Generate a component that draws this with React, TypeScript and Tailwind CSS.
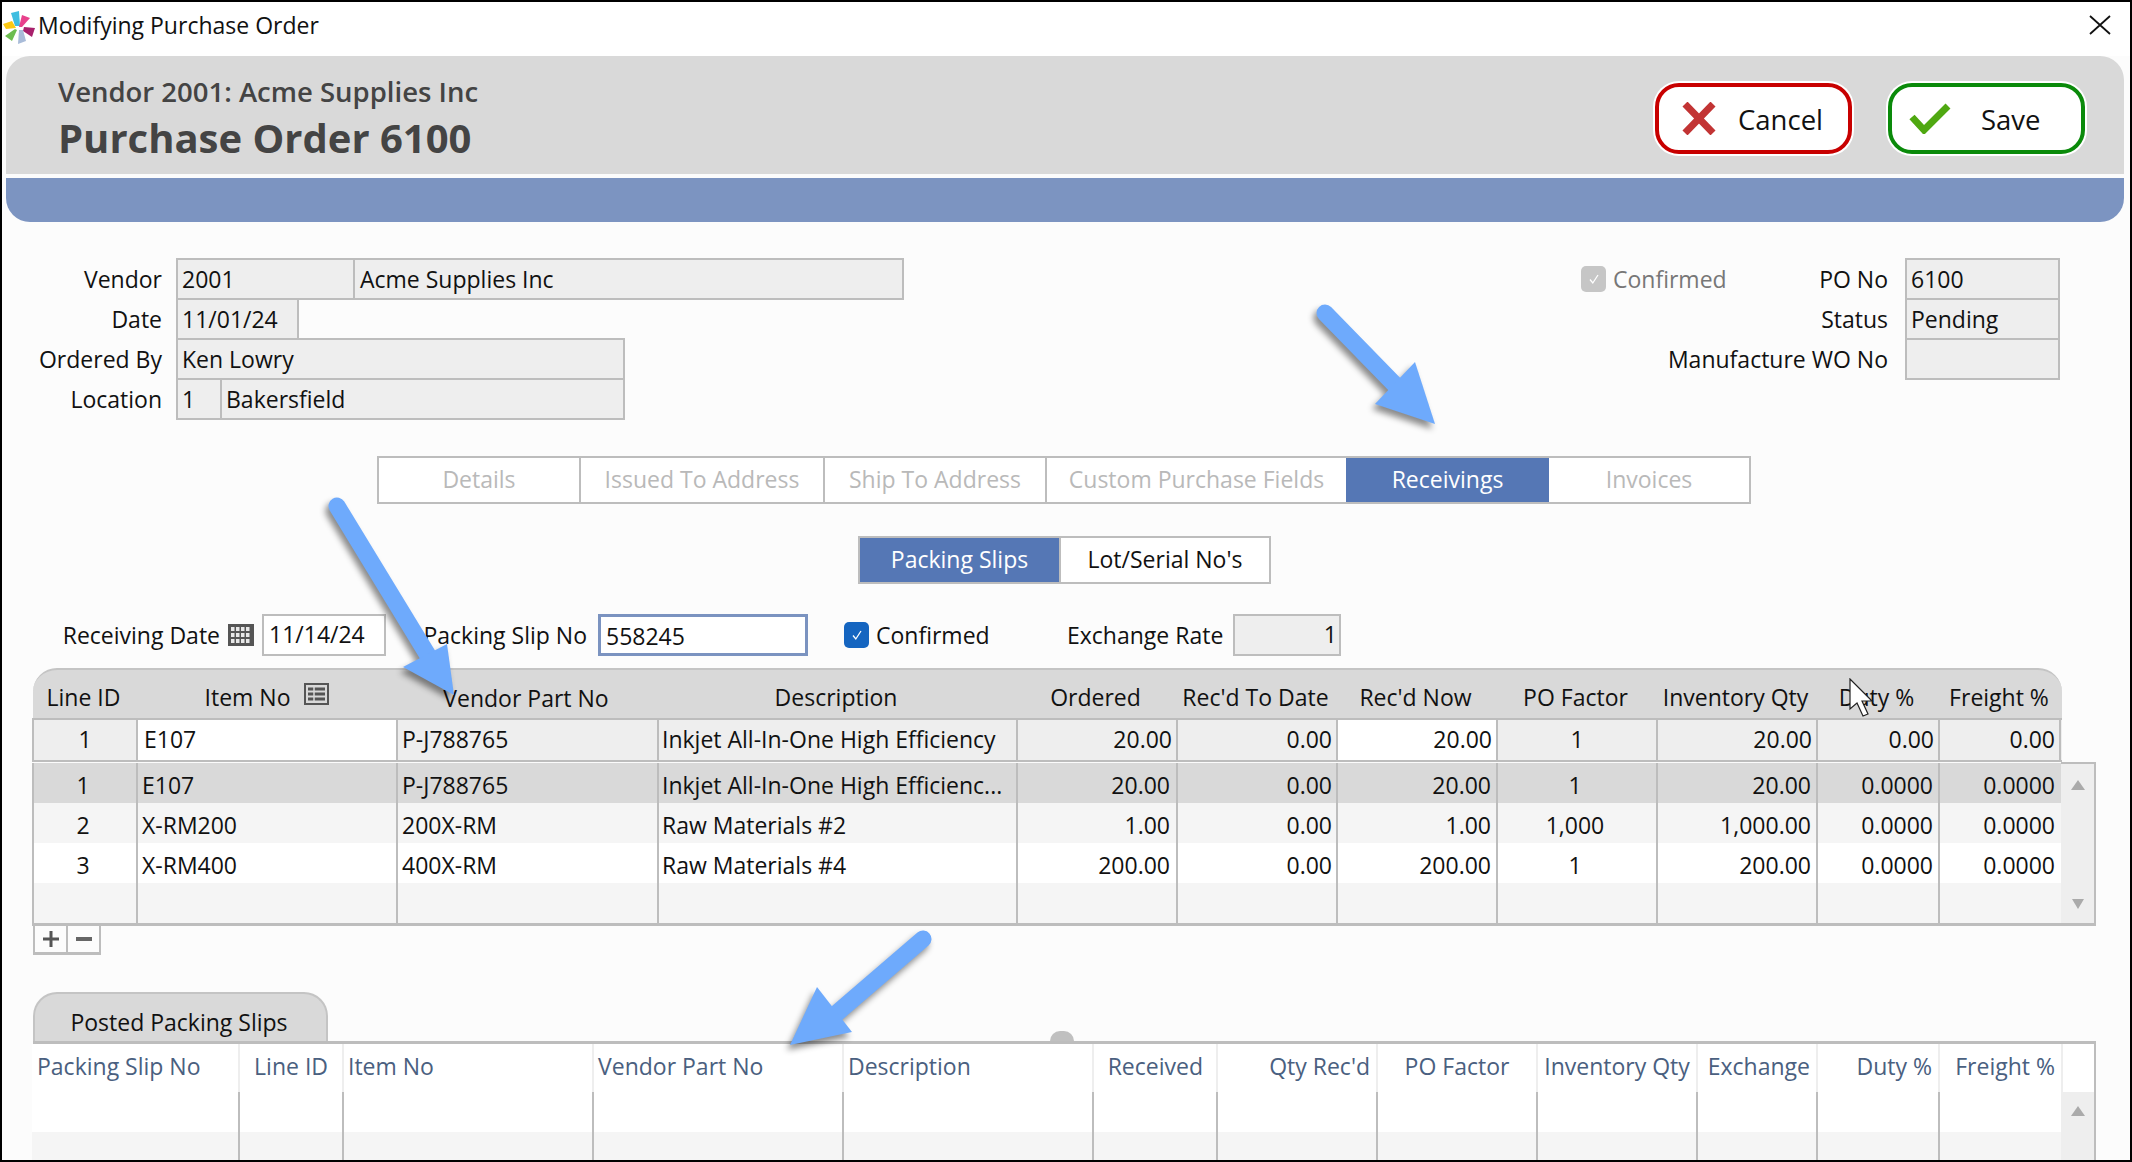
import { Fragment } from "react";

const lineCols = "grid grid-cols-[104px_260px_261px_359px_160px_160px_160px_160px_160px_122px_123px]";
const postedCols = "grid grid-cols-[206px_104px_250px_250px_250px_124px_160px_160px_160px_120px_122px_123px]";

const lineHeaders = ["Line ID", "Item No", "Vendor Part No", "Description", "Ordered", "Rec'd To Date", "Rec'd Now", "PO Factor", "Inventory Qty", "Duty %", "Freight %"];

const lineRows = [
  { id: "1", item: "E107", part: "P-J788765", desc: "Inkjet All-In-One High Efficienc...", ordered: "20.00", toDate: "0.00", now: "20.00", factor: "1", qty: "20.00", duty: "0.0000", freight: "0.0000", bg: "bg-[#d9d9d9]" },
  { id: "2", item: "X-RM200", part: "200X-RM", desc: "Raw Materials #2", ordered: "1.00", toDate: "0.00", now: "1.00", factor: "1,000", qty: "1,000.00", duty: "0.0000", freight: "0.0000", bg: "bg-[#f5f5f5]" },
  { id: "3", item: "X-RM400", part: "400X-RM", desc: "Raw Materials #4", ordered: "200.00", toDate: "0.00", now: "200.00", factor: "1", qty: "200.00", duty: "0.0000", freight: "0.0000", bg: "bg-white" },
  { id: "", item: "", part: "", desc: "", ordered: "", toDate: "", now: "", factor: "", qty: "", duty: "", freight: "", bg: "bg-[#f5f5f5]" },
];

const posted = [
  { label: "Packing Slip No", align: "pl-[5px] text-left" },
  { label: "Line ID", align: "pr-[14px] text-right" },
  { label: "Item No", align: "pl-[4px] text-left" },
  { label: "Vendor Part No", align: "pl-[4px] text-left" },
  { label: "Description", align: "pl-[4px] text-left" },
  { label: "Received", align: "pr-[13px] text-right" },
  { label: "Qty Rec'd", align: "pr-[6px] text-right" },
  { label: "PO Factor", align: "text-center" },
  { label: "Inventory Qty", align: "text-center" },
  { label: "Exchange", align: "pr-[6px] text-right" },
  { label: "Duty %", align: "pr-[6px] text-right" },
  { label: "Freight %", align: "pr-[6px] text-right" },
];

function Logo() {
  return (
    <svg width="36" height="42" viewBox="0 0 36 42" className="-ml-[2px] shrink-0">
      <polygon points="11,9 19,7 20,22 15,22" fill="#3fbde0" />
      <polygon points="22,11 30,14 22,23 19,23" fill="#e8418c" />
      <polygon points="24,23 35,24 32,33 23,27" fill="#a8206c" />
      <polygon points="19,26 23,26 26,37 18,40" fill="#a9bcd9" />
      <polygon points="17,26 12,37 5,32 15,25" fill="#6cbd4f" />
      <polygon points="3,20 12,17 16,24 6,25" fill="#fbc913" />
    </svg>
  );
}

function Field({ className, children }: { className: string; children?: React.ReactNode }) {
  return (
    <div className={`h-[42px] shrink-0 border-2 border-[#bdbdbd] bg-[#eeeeee] px-[4px] leading-[38px] whitespace-nowrap ${className}`}>
      {children}
    </div>
  );
}

function FormRow({ label, children }: { label: string; children: React.ReactNode }) {
  return (
    <div className="-mt-[2px] flex first:mt-0">
      <div className="w-[174px] shrink-0 pr-[14px] text-right leading-[42px]">{label}</div>
      {children}
    </div>
  );
}

function GridIcon() {
  return (
    <svg width="26" height="22" viewBox="0 0 26 22" className="shrink-0">
      <rect width="26" height="22" fill="#555" />
      {[3, 9, 15].map((y) =>
        [3, 8, 13, 18].map((x) => <rect key={`${x}-${y}`} x={x} y={y} width="3.5" height="4" fill="#e8e8e8" />)
      )}
    </svg>
  );
}

function ListIcon() {
  return (
    <svg width="25" height="22" viewBox="0 0 25 22" fill="none" stroke="#555" className="shrink-0">
      <rect x="1" y="1" width="23" height="20" strokeWidth="2" />
      <path d="M4 6h17M4 11h17M4 16h17" strokeWidth="3" />
      <path d="M10 4v15" stroke="#d9d9d9" strokeWidth="1.5" />
    </svg>
  );
}

function Check({ bg, stroke }: { bg: string; stroke: string }) {
  return (
    <span className={`flex h-[26px] w-[25px] shrink-0 items-center justify-center rounded-[5px] ${bg}`}>
      <svg width="14" height="14" viewBox="0 0 14 14" fill="none" stroke={stroke} strokeWidth="1.3">
        <path d="M3 7.5l2.8 3.5L11 3" />
      </svg>
    </span>
  );
}

function Arrows() {
  return (
    <svg width="2132" height="1162" viewBox="0 0 2132 1162" className="pointer-events-none absolute top-0 left-0 drop-shadow-[-3px_5px_3px_rgba(0,0,0,0.45)]">
      <g fill="#6eaafc" stroke="#6eaafc" strokeLinecap="round">
        <line x1="1323" y1="311" x2="1402" y2="392" strokeWidth="17" />
        <polygon points="1413,360 1433,422 1373,402" strokeWidth="0" />
        <line x1="335" y1="504" x2="430" y2="660" strokeWidth="17" />
        <polygon points="445,642 452,693 401,665" strokeWidth="0" />
        <line x1="921" y1="937" x2="828" y2="1017" strokeWidth="17" />
        <polygon points="815,985 788,1043 850,1030" strokeWidth="0" />
      </g>
    </svg>
  );
}

function Cursor() {
  return (
    <svg width="28" height="40" viewBox="0 0 28 40" className="absolute top-[676px] left-[1847px]">
      <path d="M1 1v30l7-6 6 13 5-2-6-13h10z" fill="#fff" stroke="#222" strokeWidth="1.2" />
    </svg>
  );
}

export default function App() {
  return (
    <div className="relative h-[1162px] w-[2132px] overflow-hidden border-2 border-black bg-[#fcfcfc] font-['Open_Sans',sans-serif] text-[23px] text-[#111]">
      <div className="flex h-[54px] items-center bg-white pb-[8px]">
        <Logo />
        <span className="ml-[2px] text-[23px]">Modifying Purchase Order</span>
        <svg width="22" height="20" viewBox="0 0 22 20" fill="none" stroke="#111" strokeWidth="1.8" className="mr-[19px] ml-auto">
          <path d="M1 1l20 18M21 1L1 19" />
        </svg>
      </div>

      <div className="ml-[4px] mr-[6px] flex h-[118px] justify-between rounded-t-[24px] bg-[#d9d9d9]">
        <div className="pt-[17px] pl-[52px] text-[#444]">
          <div className="text-[27.5px] leading-[38px] font-semibold">Vendor 2001: Acme Supplies Inc</div>
          <div className="text-[40px] leading-[54px] font-bold">Purchase Order 6100</div>
        </div>
        <div className="flex items-start gap-[36px] pt-[27px] pr-[39px]">
          <button className="flex h-[71px] w-[197px] items-center rounded-[24px] border-4 border-[#c80000] bg-white pt-[2px] pl-[23px] text-[27.5px] shadow-[0_0_0_2px_#fff]">
            <svg width="34" height="33" viewBox="0 0 34 33" fill="none" stroke="#c23434" strokeWidth="7" className="-mt-[2px]">
              <path d="M3 2l28 29M31 2L3 31" />
            </svg>
            <span className="ml-[22px]">Cancel</span>
          </button>
          <button className="flex h-[71px] w-[197px] items-center rounded-[24px] border-4 border-[#0a8a0a] bg-white pt-[2px] pl-[17px] text-[27.5px] shadow-[0_0_0_2px_#fff]">
            <svg width="42" height="31" viewBox="0 0 42 31" fill="none" stroke="#4fa811" strokeWidth="7" className="-mt-[2px]">
              <path d="M3 14l12 13L39 3" />
            </svg>
            <span className="ml-[30px]">Save</span>
          </button>
        </div>
      </div>
      <div className="mt-[4px] mr-[6px] ml-[4px] h-[44px] rounded-b-[24px] bg-[#7c94c1]" />

      <div className="mt-[36px] flex h-[161px] justify-between pr-[70px]">
        <div>
          <FormRow label="Vendor">
            <Field className="w-[179px]">2001</Field>
            <Field className="-ml-[2px] w-[551px] pl-[5px]">Acme Supplies Inc</Field>
          </FormRow>
          <FormRow label="Date">
            <Field className="w-[123px]">11/01/24</Field>
          </FormRow>
          <FormRow label="Ordered By">
            <Field className="w-[449px]">Ken Lowry</Field>
          </FormRow>
          <FormRow label="Location">
            <Field className="w-[46px]">1</Field>
            <Field className="-ml-[2px] w-[405px]">Bakersfield</Field>
          </FormRow>
        </div>
        <div className="flex flex-col items-end">
          <div className="flex">
            <div className="flex w-[324px] items-center justify-between pr-[17px]">
              <div className="flex items-center gap-[7px] text-[#777]">
                <Check bg="bg-[#c6c6c6]" stroke="#fff" />
                <span>Confirmed</span>
              </div>
              <span>PO No</span>
            </div>
            <Field className="w-[155px]">6100</Field>
          </div>
          <div className="-mt-[2px] flex">
            <div className="pr-[17px] leading-[42px]">Status</div>
            <Field className="w-[155px]">Pending</Field>
          </div>
          <div className="-mt-[2px] flex">
            <div className="pr-[17px] leading-[42px] whitespace-nowrap">Manufacture WO No</div>
            <Field className="w-[155px]" />
          </div>
        </div>
      </div>

      <div className="mt-[37px] ml-[375px] flex h-[48px] w-[1374px] border-2 border-[#bdbdbd] bg-white text-center leading-[43px] text-[#b9b9b9]">
        <div className="w-[202px] border-r-2 border-[#bdbdbd]">Details</div>
        <div className="w-[244px] border-r-2 border-[#bdbdbd]">Issued To Address</div>
        <div className="w-[222px] border-r-2 border-[#bdbdbd]">Ship To Address</div>
        <div className="w-[299px]">Custom Purchase Fields</div>
        <div className="w-[203px] bg-[#5577b5] text-white">Receivings</div>
        <div className="flex-1">Invoices</div>
      </div>

      <div className="mt-[32px] ml-[856px] flex h-[48px] w-[413px] border-2 border-[#bdbdbd] bg-white text-center leading-[43px]">
        <div className="w-[199px] bg-[#5577b5] text-white">Packing Slips</div>
        <div className="flex-1 border-l-2 border-[#bdbdbd]">Lot/Serial No's</div>
      </div>

      <div className="mt-[30px] ml-[31px] flex h-[42px] items-center">
        <div className="w-[187px] text-right whitespace-nowrap">Receiving Date</div>
        <div className="ml-[8px]"><GridIcon /></div>
        <div className="ml-[8px] h-[42px] w-[124px] border-2 border-[#bdbdbd] bg-white px-[5px] leading-[37px]">11/14/24</div>
        <div className="w-[201px] text-right whitespace-nowrap">Packing Slip No</div>
        <div className="ml-[11px] h-[42px] w-[210px] border-[3px] border-[#7b93c0] bg-white px-[5px] leading-[38px]">558245</div>
        <div className="ml-[36px]"><Check bg="bg-[#1565c0]" stroke="#fff" /></div>
        <span className="ml-[7px] w-[345px] shrink-0">
          Confirmed
        </span>
        <span className="-ml-[154px] w-[154px] shrink-0 text-right whitespace-nowrap">Exchange Rate</span>
        <div className="ml-[12px] h-[42px] w-[108px] border-2 border-[#bdbdbd] bg-[#eeeeee] px-[2px] text-right leading-[37px]">1</div>
      </div>

      <div className="mt-[12px] ml-[31px] w-[2029px]">
        <div className={`${lineCols} h-[50px] items-center rounded-t-[24px] border-t-2 border-[#c4c4c4] bg-[#d9d9d9] pt-[6px] text-center`}>
          {lineHeaders.map((h) =>
            h === "Item No" ? (
              <div key={h} className="flex items-center justify-center gap-[14px]">
                <span>{h}</span>
                <div className="-mt-[6px]"><ListIcon /></div>
              </div>
            ) : (
              <div key={h} className={h === "Vendor Part No" ? "pt-[3px] pr-[3px]" : "pr-[3px]"}>{h}</div>
            )
          )}
        </div>
        <div className={`${lineCols} -ml-[1px] h-[44px] border-y-2 border-[#bdbdbd] bg-[#eeeeee] leading-[38px]`}>
          <div className="border-l-2 border-[#bdbdbd] text-center">1</div>
          <div className="border-l-2 border-[#bdbdbd] bg-white pl-[6px]">E107</div>
          <div className="border-l-2 border-[#bdbdbd] pl-[4px]">P-J788765</div>
          <div className="border-l-2 border-[#bdbdbd] pl-[3px] whitespace-nowrap">Inkjet All-In-One High Efficiency</div>
          <div className="border-l-2 border-[#bdbdbd] pr-[4px] text-right">20.00</div>
          <div className="border-l-2 border-[#bdbdbd] pr-[4px] text-right">0.00</div>
          <div className="border-l-2 border-[#bdbdbd] bg-white pr-[4px] text-right">20.00</div>
          <div className="border-l-2 border-[#bdbdbd] text-center">1</div>
          <div className="border-l-2 border-[#bdbdbd] pr-[4px] text-right">20.00</div>
          <div className="border-l-2 border-[#bdbdbd] pr-[4px] text-right">0.00</div>
          <div className="border-x-2 border-[#bdbdbd] pr-[4px] text-right">0.00</div>
        </div>
      </div>

      <div className="ml-[30px] flex w-[2064px]">
        <div className="w-[2029px] border-b-[3px] border-[#bdbdbd] pt-[1px]">
          {lineRows.map((r, i) => (
            <div key={i} className={`${lineCols} h-[40px] grid-rows-[40px] leading-[44px] ${r.bg}`}>
              <div className="border-l-2 border-[#bdbdbd] pr-[4px] text-center">{r.id}</div>
              <div className="border-l-2 border-[#bdbdbd] pl-[4px]">{r.item}</div>
              <div className="border-l-2 border-[#bdbdbd] pl-[4px]">{r.part}</div>
              <div className="border-l-2 border-[#bdbdbd] pl-[3px] whitespace-nowrap">{r.desc}</div>
              <div className="border-l-2 border-[#bdbdbd] pr-[6px] text-right">{r.ordered}</div>
              <div className="border-l-2 border-[#bdbdbd] pr-[4px] text-right">{r.toDate}</div>
              <div className="border-l-2 border-[#bdbdbd] pr-[5px] text-right">{r.now}</div>
              <div className="border-l-2 border-[#bdbdbd] pr-[4px] text-center">{r.factor}</div>
              <div className="border-l-2 border-[#bdbdbd] pr-[5px] text-right">{r.qty}</div>
              <div className="border-l-2 border-[#bdbdbd] pr-[5px] text-right">{r.duty}</div>
              <div className="border-l-2 border-[#bdbdbd] pr-[6px] text-right">{r.freight}</div>
            </div>
          ))}
        </div>
        <div className="flex w-[35px] flex-col items-center justify-between border-t-2 border-r-2 border-b-[3px] border-[#bdbdbd] bg-[#eeeeee] pt-[16px] pb-[14px]">
          <svg width="14" height="10" viewBox="0 0 14 10"><polygon points="7,0 14,10 0,10" fill="#aaa" /></svg>
          <svg width="12" height="10" viewBox="0 0 12 10"><polygon points="0,0 12,0 6,10" fill="#aaa" /></svg>
        </div>
      </div>

      <div className="ml-[31px] flex h-[29px] w-[68px] border-x-2 border-b-[3px] border-[#bdbdbd] text-[#555]">
        <div className="flex w-[33px] items-center justify-center border-r-2 border-[#bdbdbd]">
          <svg width="16" height="16" viewBox="0 0 16 16" fill="none" stroke="#555" strokeWidth="3"><path d="M8 0v16M0 8h16" /></svg>
        </div>
        <div className="flex flex-1 items-center justify-center">
          <svg width="16" height="4" viewBox="0 0 16 4"><rect width="16" height="4" fill="#666" /></svg>
        </div>
      </div>

      <div className="relative mt-[37px] ml-[31px] w-[2063px]">
        <div className="h-[49px] w-[295px] rounded-t-[24px] border-x-2 border-t-2 border-[#c4c4c4] bg-[#d9d9d9] pt-[9px] pr-[3px] text-center leading-[38px]">
          Posted Packing Slips
        </div>
        <div className="absolute top-[39px] left-[1017px] h-[10px] w-[24px] rounded-t-full bg-[#c0c0c0]" />
        <div className="flex border-x-2 border-t-[3px] border-[#bdbdbd]">
          <div className="flex-1">
            <div className={`${postedCols} -ml-[3px] h-[48px] bg-white leading-[44px] text-[#4a6080]`}>
              {posted.map((c, i) => (
                <div key={c.label} className={`${i > 0 ? "border-l-2 border-[#eeeeee]" : ""} ${c.align} whitespace-nowrap`}>
                  {c.label}
                </div>
              ))}
            </div>
            {["bg-white h-[40px]", "bg-[#f5f5f5] h-[40px]"].map((bg) => (
              <div key={bg} className={`${postedCols} -ml-[3px] ${bg}`}>
                {posted.map((c, i) => (
                  <Fragment key={c.label}>
                    <div className={i > 0 ? "border-l-2 border-[#bdbdbd]" : ""} />
                  </Fragment>
                ))}
              </div>
            ))}
          </div>
          <div className="w-[33px]">
            <div className="h-[48px] border-l-2 border-[#eeeeee] bg-white" />
            <div className="flex h-[80px] justify-center bg-[#eeeeee] pt-[14px]">
              <svg width="14" height="10" viewBox="0 0 14 10"><polygon points="7,0 14,10 0,10" fill="#aaa" /></svg>
            </div>
          </div>
        </div>
      </div>

      <div className="absolute top-0 left-0 h-0 w-0">
        <Arrows />
        <Cursor />
      </div>
    </div>
  );
}
